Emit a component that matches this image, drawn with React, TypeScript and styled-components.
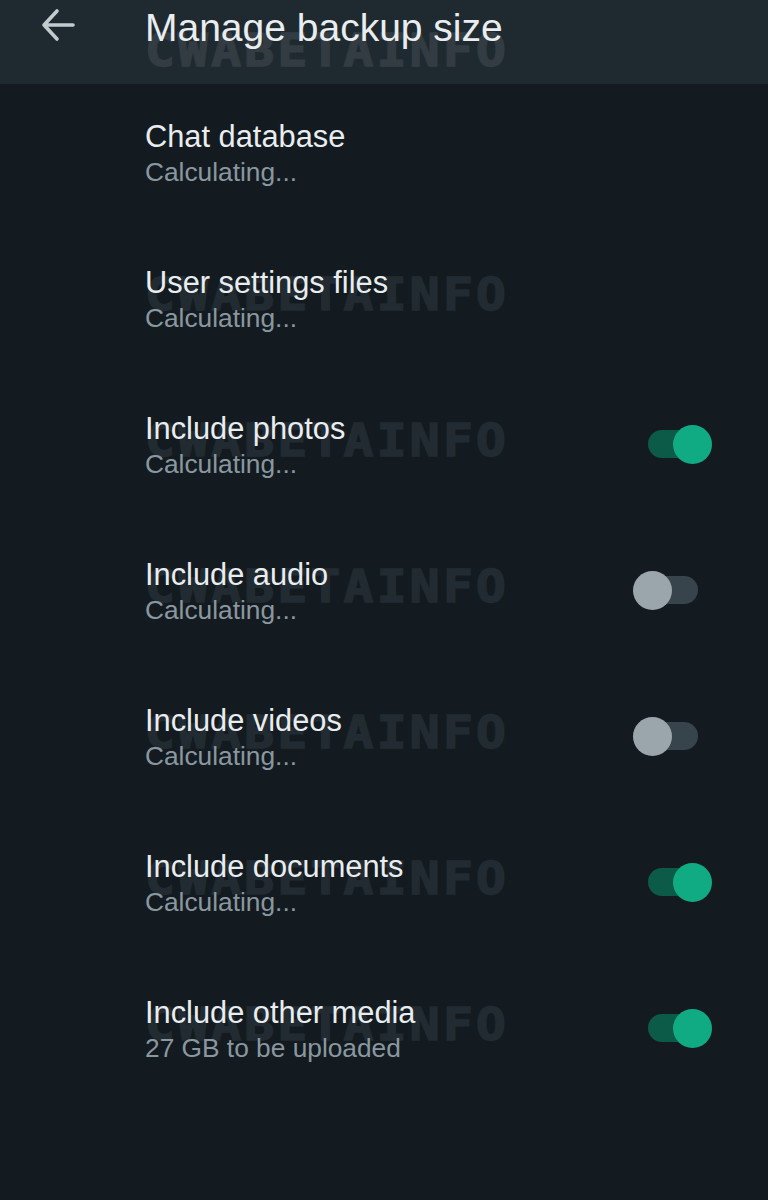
import React, { useState } from 'react';
import styled, { createGlobalStyle } from 'styled-components';

const GlobalStyle = createGlobalStyle`
  html, body {
    margin: 0;
    padding: 0;
    background: #131b21;
    min-height: 100vh;
  }
  * {
    box-sizing: border-box;
  }
`;

const Page = styled.div`
  width: 768px;
  min-height: 1200px;
  background: #131b21;
  font-family: 'Liberation Sans', Arial, sans-serif;
`;

const Header = styled.header`
  position: relative;
  display: flex;
  align-items: flex-start;
  height: 84px;
  background: #1f2a30;
`;

const BackButton = styled.button`
  display: flex;
  align-items: center;
  justify-content: flex-start;
  width: 145px;
  height: 56px;
  margin: 0;
  padding: 0 0 0 41px;
  border: 0;
  background: none;
  cursor: pointer;
`;

const Title = styled.h1`
  position: relative;
  z-index: 1;
  margin: 0;
  font-size: 39px;
  line-height: 56px;
  font-weight: 400;
  color: #e9edef;
`;

// faint site watermark stamped over the screenshot
const Watermark = styled.span<{ $top: number; $header?: boolean }>`
  position: absolute;
  left: 145px;
  top: ${(p) => p.$top}px;
  font-family: 'DejaVu Sans Mono', monospace;
  font-weight: 700;
  font-size: 45px;
  line-height: 1;
  letter-spacing: 3px;
  transform: scaleX(1.1);
  transform-origin: left top;
  color: ${(p) => (p.$header ? '#323c42' : '#222b31')};
  -webkit-text-stroke: 1.5px ${(p) => (p.$header ? '#323c42' : '#222b31')};
  pointer-events: none;
  user-select: none;
  white-space: nowrap;
`;

const List = styled.div`
  display: flex;
  flex-direction: column;
`;

const Row = styled.div`
  position: relative;
  display: flex;
  align-items: center;
  height: 146px;
  padding: 34px 56px 40px 145px;
`;

const Texts = styled.div`
  position: relative;
  z-index: 1;
  flex: 1;
  display: flex;
  flex-direction: column;
`;

const RowTitle = styled.div`
  font-size: 30.8px;
  line-height: 37px;
  color: #e9edef;
`;

const RowSub = styled.div`
  font-size: 26.3px;
  line-height: 35px;
  color: #8a979f;
`;

const Switch = styled.button<{ $on: boolean }>`
  position: relative;
  width: 79px;
  height: 39px;
  margin: -4px 0 0;
  padding: 0;
  border: 0;
  background: none;
  cursor: pointer;

  &::before {
    content: '';
    position: absolute;
    left: 15px;
    top: 5.5px;
    width: 50px;
    height: 28px;
    border-radius: 14px;
    background: ${(p) => (p.$on ? '#0c5a48' : '#37444c')};
  }

  &::after {
    content: '';
    position: absolute;
    top: 0;
    left: ${(p) => (p.$on ? '40px' : '0')};
    width: 39px;
    height: 39px;
    border-radius: 50%;
    background: ${(p) => (p.$on ? '#10aa83' : '#9aa5ac')};
  }
`;

const BackArrow = () => (
  <svg width="36" height="40" viewBox="0 0 36 40" fill="none">
    <path
      d="M3 17 H32 M16 3 L3 17 L16 31"
      stroke="#c3cbcf"
      strokeWidth="3.6"
      strokeLinecap="round"
      strokeLinejoin="round"
    />
  </svg>
);

interface Item {
  title: string;
  sub: string;
  toggle?: boolean;
  mark?: boolean;
}

const items: Item[] = [
  { title: 'Chat database', sub: 'Calculating...' },
  { title: 'User settings files', sub: 'Calculating...', mark: true },
  { title: 'Include photos', sub: 'Calculating...', toggle: true, mark: true },
  { title: 'Include audio', sub: 'Calculating...', toggle: false, mark: true },
  { title: 'Include videos', sub: 'Calculating...', toggle: false, mark: true },
  { title: 'Include documents', sub: 'Calculating...', toggle: true, mark: true },
  { title: 'Include other media', sub: '27 GB to be uploaded', toggle: true, mark: true },
];

export default function App() {
  const [toggles, setToggles] = useState<Record<number, boolean>>(() => {
    const t: Record<number, boolean> = {};
    items.forEach((it, i) => {
      if (it.toggle !== undefined) t[i] = it.toggle;
    });
    return t;
  });

  return (
    <>
      <GlobalStyle />
      <Page>
        <Header>
          <Watermark $top={28} $header>
            CWABETAINFO
          </Watermark>
          <BackButton aria-label="Back">
            <BackArrow />
          </BackButton>
          <Title>Manage backup size</Title>
        </Header>
        <List>
          {items.map((it, i) => (
            <Row key={it.title}>
              {it.mark && <Watermark $top={42}>CWABETAINFO</Watermark>}
              <Texts>
                <RowTitle>{it.title}</RowTitle>
                <RowSub>{it.sub}</RowSub>
              </Texts>
              {it.toggle !== undefined && (
                <Switch
                  $on={toggles[i]}
                  aria-label={it.title}
                  onClick={() => setToggles({ ...toggles, [i]: !toggles[i] })}
                />
              )}
            </Row>
          ))}
        </List>
      </Page>
    </>
  );
}
